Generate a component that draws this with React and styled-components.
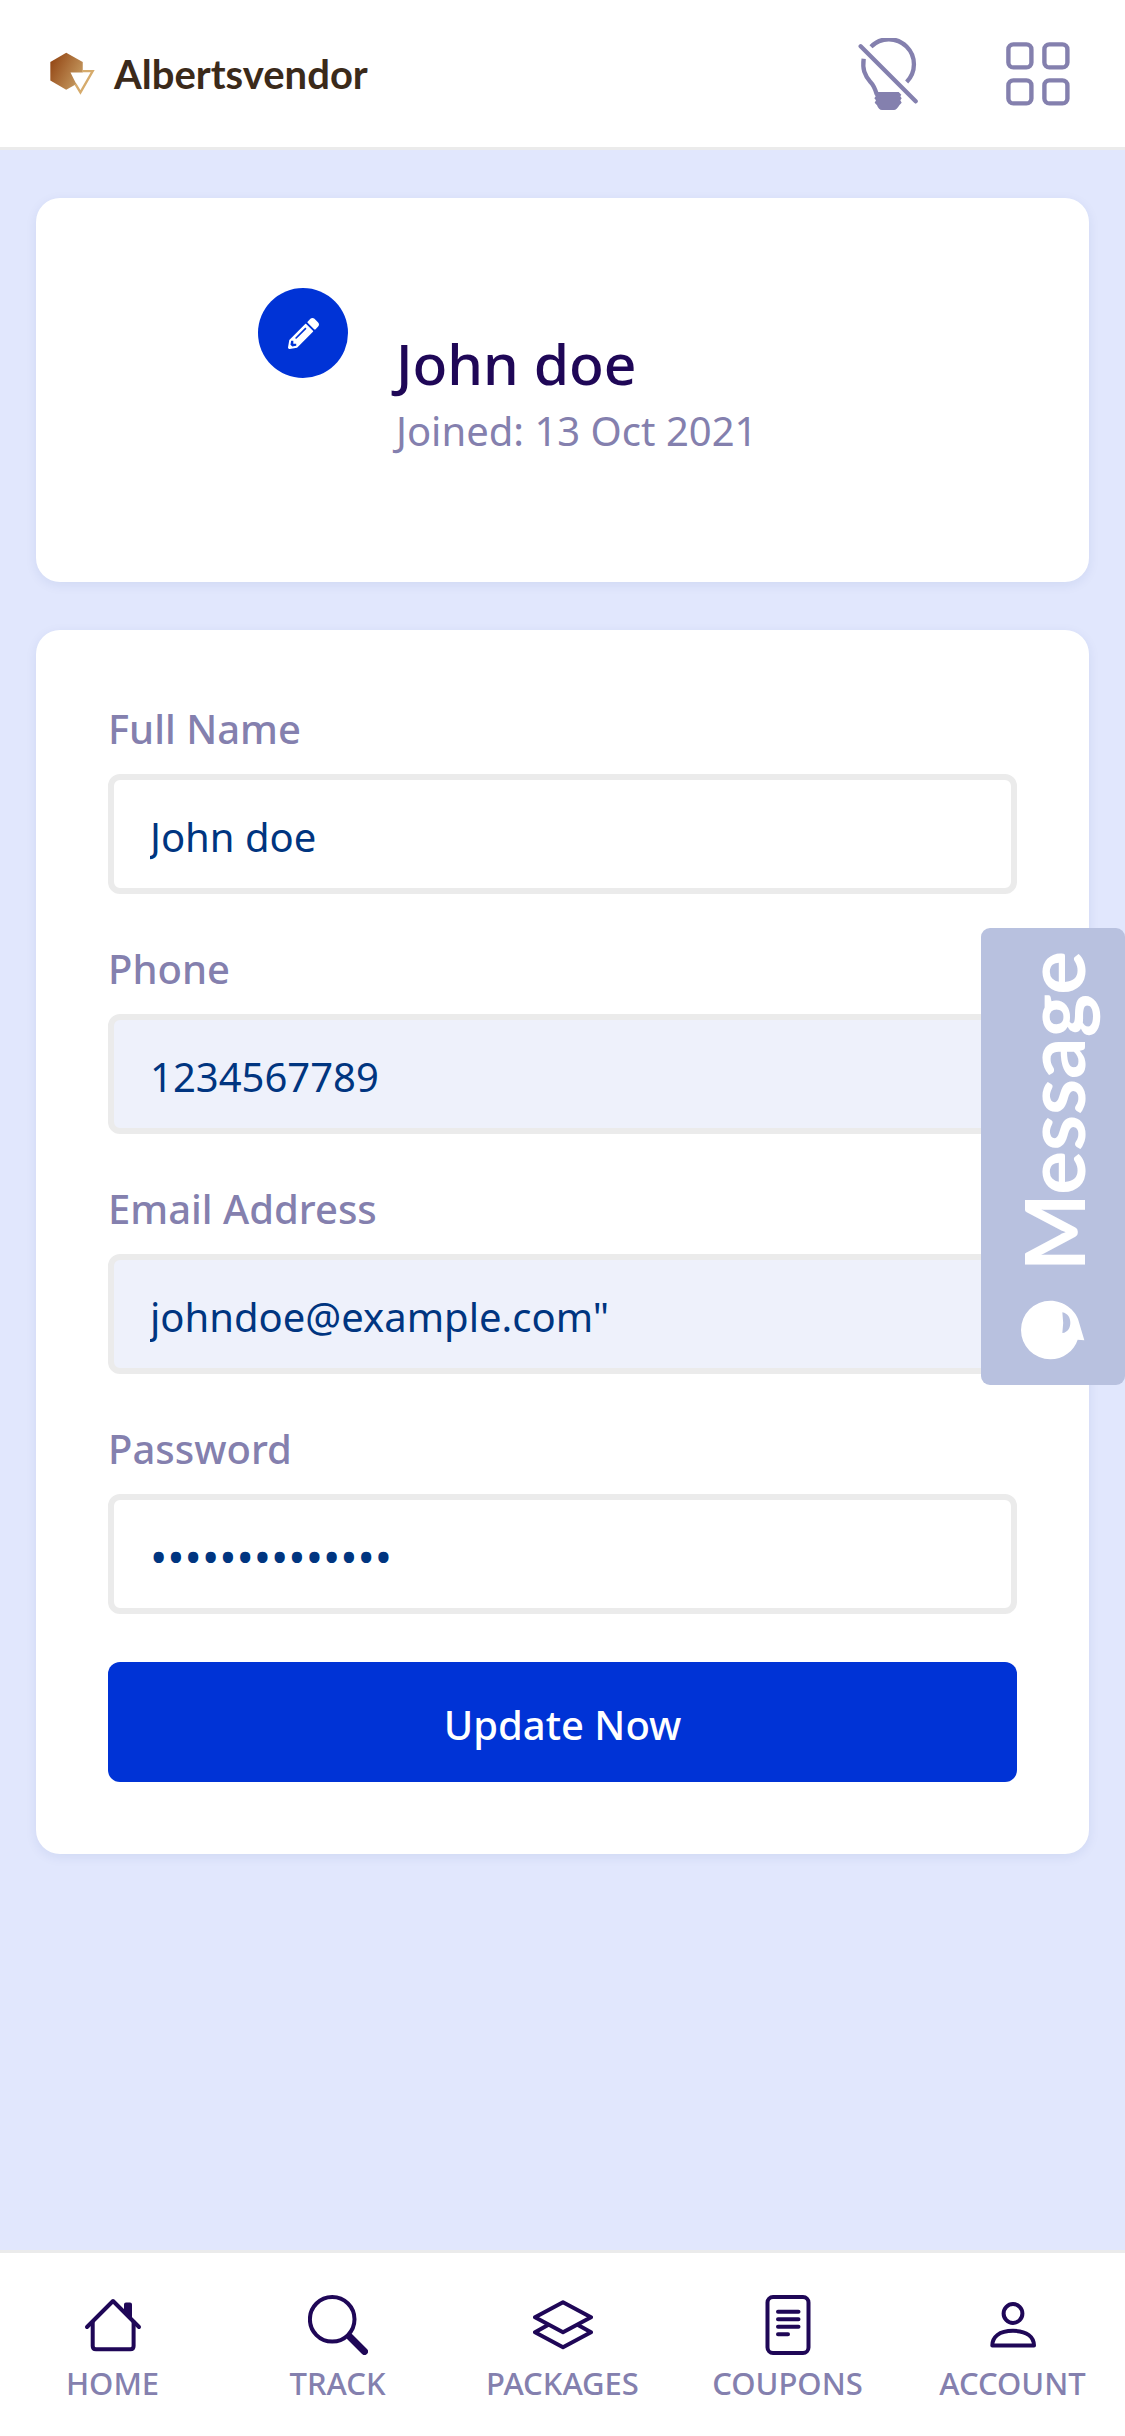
import React from "react";
import styled, { createGlobalStyle } from "styled-components";
import { FaPencilAlt } from "react-icons/fa";

const color = {
  page: "#e1e7fd",
  line: "#ebebeb",
  muted: "#8480ae",
  dark: "#1f0757",
  primary: "#0033d6",
  value: "#003580",
};

const GlobalStyle = createGlobalStyle`
  *, *::before, *::after { box-sizing: border-box; }
  body {
    margin: 0;
    background: ${color.page};
    font-family: "Noto Sans", "Open Sans", sans-serif;
  }
`;

const Page = styled.div`
  display: flex;
  flex-direction: column;
  min-height: 100vh;
`;

const Header = styled.header`
  display: flex;
  align-items: center;
  justify-content: space-between;
  height: 150px;
  padding: 0 55px 0 50px;
  background: #fff;
  border-bottom: 3px solid ${color.line};
`;

const Brand = styled.a`
  display: flex;
  align-items: center;
  gap: 19px;
  color: #3b2a1a;
  font: 700 40px/48px Lato, sans-serif;
  text-decoration: none;
`;

const Actions = styled.div`
  display: flex;
  align-items: center;
  gap: 88px;
`;

const IconButton = styled.button`
  display: flex;
  padding: 0;
  border: 0;
  background: none;
  color: ${color.muted};
`;

const Main = styled.main`
  display: flex;
  flex: 1;
  flex-direction: column;
  gap: 48px;
  padding: 48px 36px;
`;

const Card = styled.section`
  padding: ${(p) => p.$pad};
  border-radius: 24px;
  background: #fff;
  box-shadow: 0 3px 12px rgba(0, 53, 128, 0.08);
`;

const Profile = styled.div`
  display: flex;
  align-items: flex-start;
  gap: 48px;
  max-width: 609px;
  min-height: 204px;
  margin: 0 auto;
`;

const EditButton = styled.button`
  display: flex;
  align-items: center;
  justify-content: center;
  width: 90px;
  height: 90px;
  padding: 0;
  border: 0;
  border-radius: 50%;
  background: ${color.primary};
  color: #fff;
`;

const ProfileText = styled.div`
  align-self: center;
  padding-top: 10px;
`;

const Name = styled.h1`
  margin: 0;
  color: ${color.dark};
  font-size: 57px;
  font-weight: 500;
  line-height: 72px;
`;

const Joined = styled.p`
  margin: 0;
  color: ${color.muted};
  font-size: 40px;
  line-height: 64px;
`;

const Form = styled.form`
  display: flex;
  flex-direction: column;
  gap: 48px;
`;

const Field = styled.div`
  display: flex;
  flex-direction: column;
  gap: 18px;
`;

const Label = styled.label`
  color: ${color.muted};
  font-size: 40px;
  font-weight: 500;
  line-height: 54px;
`;

const Input = styled.input`
  width: 100%;
  height: 120px;
  padding: 4px 36px 0;
  border: 6px solid ${color.line};
  border-radius: 12px;
  outline: 0;
  background: ${(p) => (p.readOnly ? "#eef1fb" : "#fff")};
  color: ${color.value};
  font-family: inherit;
  font-size: ${(p) => (p.type === "password" ? "46px" : "40px")};
`;

const Submit = styled.button`
  height: 120px;
  padding: 4px 36px 0;
  border: 0;
  border-radius: 12px;
  background: ${color.primary};
  color: #fff;
  font-family: inherit;
  font-size: 40px;
  font-weight: 500;
`;

const MessageTab = styled.button`
  position: fixed;
  top: 928px;
  right: 0;
  display: flex;
  flex-direction: column;
  align-items: center;
  gap: 29px;
  width: 144px;
  padding: 23px 0 25px;
  border: 0;
  border-radius: 9px;
  background: #b8c1df;
  color: #fff;
`;

const MessageText = styled.span`
  writing-mode: vertical-rl;
  transform: rotate(180deg);
  font: 700 82px/96px Lato, sans-serif;
`;

const Nav = styled.nav`
  position: sticky;
  bottom: 0;
  display: grid;
  grid-template-columns: repeat(5, 1fr);
  height: 186px;
  border-top: 3px solid ${color.line};
  background: #fff;
`;

const NavLink = styled.a`
  display: flex;
  flex-direction: column;
  align-items: center;
  gap: 8px;
  padding-top: 42px;
  color: ${color.muted};
  font-size: 31px;
  font-weight: 500;
  line-height: 40px;
  text-decoration: none;

  svg { color: ${color.dark}; }
`;

const NavIcon = styled.svg.attrs({
  viewBox: "0 0 60 60",
  fill: "none",
  stroke: "currentColor",
  strokeWidth: 4,
  strokeLinecap: "round",
  strokeLinejoin: "round",
  "aria-hidden": true,
})`
  width: 60px;
  height: 60px;
`;

const LogoMark = () => (
  <svg width="45" height="43" viewBox="150 160 136 128" aria-hidden="true">
    <defs>
      <linearGradient id="brand" x1="0" y1="0.2" x2="1" y2="0.8">
        <stop offset="0" stopColor="#934614" />
        <stop offset="1" stopColor="#c9a066" />
      </linearGradient>
    </defs>
    <path d="M199 161 249 189V245L199 273 151 245V189Z" fill="url(#brand)" />
    <path d="M212 221H280L242 281Z" fill="#fff" />
    <path d="M248 217H279L242 281 227 256" fill="none" stroke="#d6ab6c" strokeWidth="7" />
  </svg>
);

const BulbOff = () => (
  <svg width="60" height="72" viewBox="114 117 180 216" fill="none" stroke="currentColor" strokeWidth="13" aria-hidden="true">
    <path d="M153 143A75 75 0 0 1 260 249" />
    <path d="M131 179C127 210 133 228 152 250Q162 260 170 285" />
    <path d="M122 142 287 307" strokeLinecap="round" />
    <path d="M172 279H236L244 287 241 292 245 298 241 304 245 311 238 319 Q230 333 222 333H186Q176 333 171 319L164 311 168 304 163 298 167 292 164 287Z" fill="currentColor" stroke="none" />
  </svg>
);

const GridIcon = () => (
  <svg width="64" height="64" viewBox="0 0 64 64" fill="none" stroke="currentColor" strokeWidth="4.4" aria-hidden="true">
    <rect x="2.4" y="2.4" width="23" height="23" rx="5" />
    <rect x="38.4" y="2.4" width="23" height="23" rx="5" />
    <rect x="2.4" y="38.4" width="23" height="23" rx="5" />
    <rect x="38.4" y="38.4" width="23" height="23" rx="5" />
  </svg>
);

const ChatIcon = () => (
  <svg width="64" height="60" viewBox="245 1192 192 180" aria-hidden="true">
    <path d="M333 1194C374 1194 408 1224 416 1249L435 1313 415 1311C405 1345 370 1370 333 1370A88 88 0 0 1 333 1194Z" fill="#fff" />
    <path d="M369 1229C386 1232 393 1246 393 1260S386 1289 369 1291Q374 1260 369 1229Z" fill="#b8c1df" />
  </svg>
);

const links = [
  {
    label: "HOME",
    icon: (
      <>
        <path d="M4 32 30 6 56 32" />
        <path d="M9.7 27V51Q9.7 54.3 13 54.3H47.3Q50.6 54.3 50.6 51V27" />
        <path d="M43 9.5H47V22L43 18Z" fill="currentColor" />
      </>
    ),
  },
  {
    label: "TRACK",
    icon: (
      <>
        <circle cx="24.2" cy="24.3" r="22.3" />
        <path d="M42 42 56.5 56.5" strokeWidth="7" />
      </>
    ),
  },
  {
    label: "PACKAGES",
    icon: (
      <>
        <path d="M2 22.3 30 7.3 58 22.3 30 37.3Z" />
        <path d="M15 30 2 37.3 30 52.3 58 37.3 45 30" />
      </>
    ),
  },
  {
    label: "COUPONS",
    icon: (
      <>
        <rect x="9.5" y="2" width="41" height="56" rx="5.5" />
        <path d="M20 16.7H40.5M20 24.3H40.5M20 31.7H40.5M20 39.3H30" />
      </>
    ),
  },
  {
    label: "ACCOUNT",
    icon: (
      <>
        <circle cx="30" cy="18.5" r="9.4" />
        <path d="M9.3 50.6C9.3 42 16 35.8 30 35.8S51 42 51 50.6Z" />
      </>
    ),
  },
];

const fields = [
  { id: "name", label: "Full Name", type: "text", value: "John doe" },
  { id: "phone", label: "Phone", type: "tel", value: "1234567789", readOnly: true },
  { id: "email", label: "Email Address", type: "email", value: 'johndoe@example.com"', readOnly: true },
  { id: "password", label: "Password", type: "password", value: "secretpassword" },
];

export default function App() {
  return (
    <Page>
      <GlobalStyle />
      <Header>
        <Brand href="#">
          <LogoMark />
          Albertsvendor
        </Brand>
        <Actions>
          <IconButton aria-label="Toggle theme"><BulbOff /></IconButton>
          <IconButton aria-label="Menu"><GridIcon /></IconButton>
        </Actions>
      </Header>
      <Main>
        <Card $pad="90px 72px">
          <Profile>
            <EditButton aria-label="Edit photo"><FaPencilAlt size={31} /></EditButton>
            <ProfileText>
              <Name>John doe</Name>
              <Joined>Joined: 13 Oct 2021</Joined>
            </ProfileText>
          </Profile>
        </Card>
        <Card $pad="72px">
          <Form onSubmit={(e) => e.preventDefault()}>
            {fields.map((f) => (
              <Field key={f.id}>
                <Label htmlFor={f.id}>{f.label}</Label>
                <Input id={f.id} type={f.type} defaultValue={f.value} readOnly={f.readOnly} />
              </Field>
            ))}
            <Submit type="submit">Update Now</Submit>
          </Form>
        </Card>
      </Main>
      <Nav>
        {links.map((l) => (
          <NavLink key={l.label} href="#">
            <NavIcon>{l.icon}</NavIcon>
            {l.label}
          </NavLink>
        ))}
      </Nav>
      <MessageTab type="button">
        <MessageText>Message</MessageText>
        <ChatIcon />
      </MessageTab>
    </Page>
  );
}
